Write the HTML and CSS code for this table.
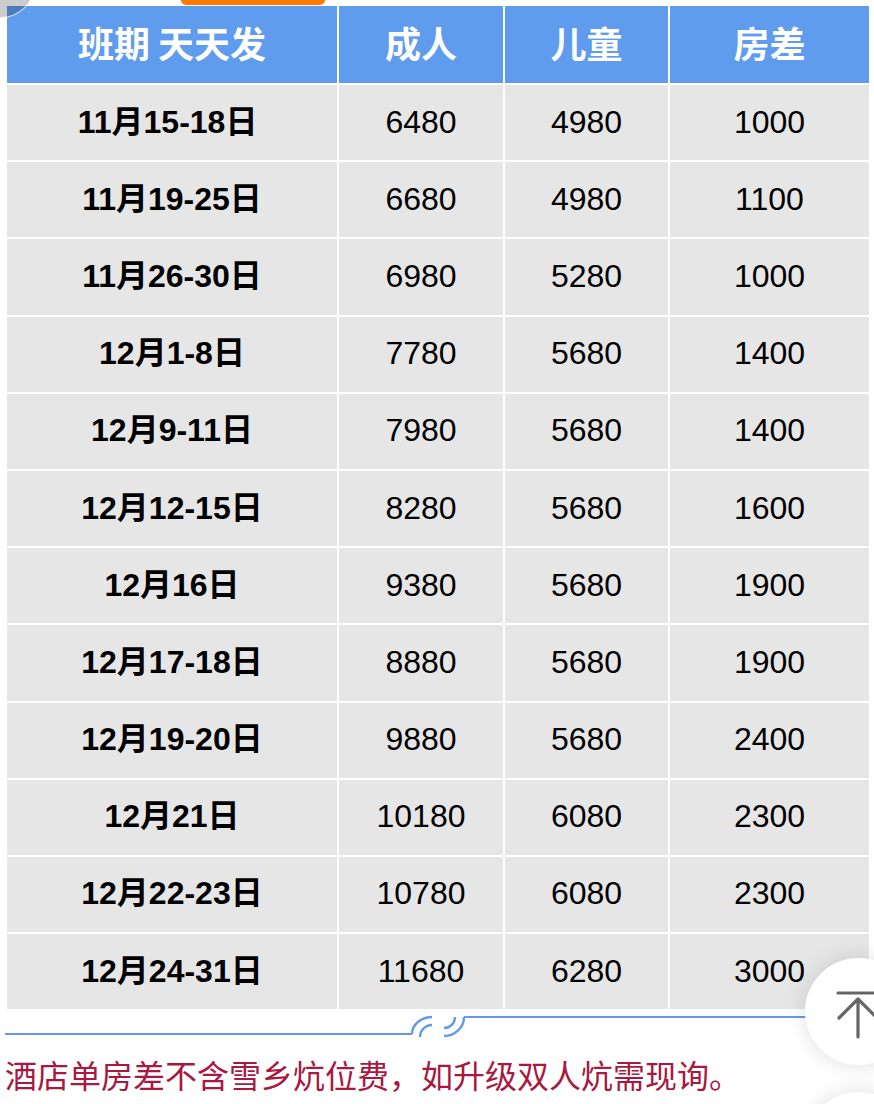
FILE: index.html
```html
<!DOCTYPE html>
<html lang="zh-CN">
<head>
<meta charset="utf-8">
<title>价格表</title>
<link rel="stylesheet" href="styles.css">
</head>
<body>
<div class="page">
  <table class="price">
    <colgroup>
      <col class="c-date"><col class="c-adult"><col class="c-child"><col class="c-room">
    </colgroup>
    <thead>
      <tr><th>班期 天天发</th><th>成人</th><th>儿童</th><th>房差</th></tr>
    </thead>
    <tbody>
      <tr><td class="date">11月15-18日&nbsp;</td><td>6480</td><td>4980</td><td>1000</td></tr>
      <tr><td class="date">11月19-25日</td><td>6680</td><td>4980</td><td>1100</td></tr>
      <tr><td class="date">11月26-30日</td><td>6980</td><td>5280</td><td>1000</td></tr>
      <tr><td class="date">12月1-8日</td><td>7780</td><td>5680</td><td>1400</td></tr>
      <tr><td class="date">12月9-11日</td><td>7980</td><td>5680</td><td>1400</td></tr>
      <tr><td class="date">12月12-15日</td><td>8280</td><td>5680</td><td>1600</td></tr>
      <tr><td class="date">12月16日</td><td>9380</td><td>5680</td><td>1900</td></tr>
      <tr><td class="date">12月17-18日</td><td>8880</td><td>5680</td><td>1900</td></tr>
      <tr><td class="date">12月19-20日</td><td>9880</td><td>5680</td><td>2400</td></tr>
      <tr><td class="date">12月21日</td><td>10180</td><td>6080</td><td>2300</td></tr>
      <tr><td class="date">12月22-23日</td><td>10780</td><td>6080</td><td>2300</td></tr>
      <tr><td class="date">12月24-31日</td><td>11680</td><td>6280</td><td>3000</td></tr>
    </tbody>
  </table>

  <div class="divider">
    <span class="seg seg-left"></span>
    <svg class="ornament" width="52" height="30" viewBox="0 0 52 30">
      <path d="M0 25 A20 17 0 0 1 20 8" />
      <path d="M8 28 A12 12 0 0 1 20 16" />
      <path d="M32 27 A20 19 0 0 0 52 8" />
      <path d="M32 19 A11 11 0 0 0 43 8" />
    </svg>
    <span class="seg seg-right"></span>
  </div>

  <p class="note">酒店单房差不含雪乡炕位费，如升级双人炕需现询。</p>
</div>

<div class="tab-mark"></div>
<div class="corner-badge"></div>
<button class="to-top" aria-label="返回顶部">
  <svg width="44" height="44" viewBox="0 0 44 44">
    <path d="M0 4 H40 M20 10 V48 M20 10 L1 29 M20 10 L39 29" />
  </svg>
</button>
<div class="float-btn"></div>
</body>
</html>
```

FILE: styles.css
```css
html, body {
  margin: 0;
  padding: 0;
  background: #ffffff;
}

body {
  width: 874px;
  height: 1104px;
  overflow: hidden;
  position: relative;
  font-family: "Liberation Sans", "Noto Sans CJK SC", sans-serif;
}

.page {
  padding: 4px 0 0 5px;
}

.price {
  table-layout: fixed;
  border-collapse: separate;
  border-spacing: 2px;
  width: 866px;
}

.c-date { width: 330px; }
.c-adult { width: 164px; }
.c-child { width: 163px; }
.c-room { width: 199px; }

.price th {
  height: 77px;
  padding: 0 0 5px 0;
  box-sizing: border-box;
  background: #5f9cee;
  color: #ffffff;
  font-family: "Noto Sans CJK SC", sans-serif;
  font-weight: 700;
  font-size: 36px;
  line-height: 40px;
  text-align: center;
  vertical-align: middle;
}

.price td {
  height: 75.2px;
  padding: 0 0 2px 0;
  box-sizing: border-box;
  background: #e6e6e6;
  color: #000000;
  font-size: 32px;
  line-height: 36px;
  text-align: center;
  vertical-align: middle;
}

.price td.date {
  font-weight: 700;
  padding-bottom: 2px;
}

.divider {
  display: flex;
  height: 26px;
  margin-top: -2px;
}

.seg {
  display: block;
}

.seg-left {
  width: 407px;
  height: 24px;
  border-bottom: 2px solid #5f9bea;
}

.seg-right {
  flex: 1;
  margin-top: 7px;
  height: 0;
  border-top: 2px solid #5f9bea;
}

.ornament {
  flex: none;
  overflow: visible;
}

.ornament path {
  fill: none;
  stroke: #5f9bea;
  stroke-width: 2.4;
}

.note {
  margin: 16px 0 0 0;
  font-family: "Noto Sans CJK SC", sans-serif;
  font-size: 32px;
  line-height: normal;
  color: #a8183f;
}

.tab-mark {
  position: absolute;
  left: 181px;
  top: -6px;
  width: 144px;
  height: 11px;
  border-radius: 5px;
  background: #ff7b00;
}

.corner-badge {
  position: absolute;
  left: -33px;
  top: -50px;
  width: 66px;
  height: 66px;
  border-radius: 50%;
  background: rgba(0, 0, 0, 0.2);
  border: 1.5px solid rgba(255, 255, 255, 0.75);
}

.to-top {
  position: absolute;
  left: 805px;
  top: 958px;
  width: 107px;
  height: 107px;
  padding: 0;
  border: none;
  border-radius: 50%;
  background: #ffffff;
  box-shadow: 0 0 22px rgba(0, 0, 0, 0.13);
  display: flex;
  align-items: flex-start;
  justify-content: flex-start;
}

.to-top svg {
  margin: 31px 0 0 33px;
  overflow: visible;
}

.to-top path {
  fill: none;
  stroke: #666666;
  stroke-width: 3.2;
  stroke-linecap: round;
}

.float-btn {
  position: absolute;
  left: 805px;
  top: 1092px;
  width: 107px;
  height: 107px;
  border-radius: 50%;
  background: #ffffff;
  box-shadow: 0 0 22px rgba(0, 0, 0, 0.13);
}
```
